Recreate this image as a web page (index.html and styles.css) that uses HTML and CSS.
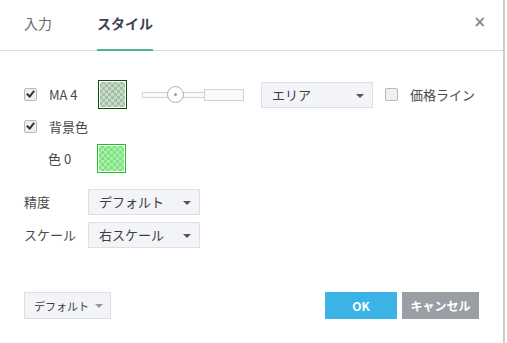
FILE: index.html
```html
<!DOCTYPE html>
<html lang="ja">
<head>
  <meta charset="UTF-8">
  <title>スタイル</title>
  <link rel="stylesheet" href="styles.css">
</head>
<body>
  <div class="dialog">
    <div class="header">
      <div class="tab">入力</div>
      <div class="tab active">スタイル</div>
      <span class="close">&times;</span>
    </div>

    <div class="content">
      <div class="row">
        <span class="check on"></span>
        <span class="label">MA 4</span>
        <span class="swatch ma"></span>
        <div class="slider">
          <span class="track"></span>
          <span class="knob"></span>
          <span class="track-box"></span>
        </div>
        <div class="select area">エリア<span class="caret"></span></div>
        <span class="check"></span>
        <span class="label price">価格ライン</span>
      </div>

      <div class="row">
        <span class="check on"></span>
        <span class="label">背景色</span>
      </div>

      <div class="row sub">
        <span class="label">色 0</span>
        <span class="swatch bg"></span>
      </div>

      <div class="row field first">
        <span class="field-label">精度</span>
        <div class="select">デフォルト<span class="caret"></span></div>
      </div>

      <div class="row field">
        <span class="field-label">スケール</span>
        <div class="select">右スケール<span class="caret"></span></div>
      </div>
    </div>

    <div class="footer">
      <div class="btn-default">デフォルト<span class="caret grey"></span></div>
      <div class="buttons">
        <div class="btn ok">OK</div>
        <div class="btn cancel">キャンセル</div>
      </div>
    </div>
  </div>
</body>
</html>
```

FILE: styles.css
```css
body {
  margin: 0;
  background: #fff;
  font-family: 'Noto Sans CJK JP', 'Liberation Sans', sans-serif;
  font-size: 13px;
  color: #4a4a4a;
}

.dialog {
  width: 503px;
  height: 343px;
  border-right: 2px solid #c8cfcc;
  position: relative;
}

.header {
  height: 50px;
  border-bottom: 1px solid #dcdcdc;
  display: flex;
  align-items: stretch;
  padding-left: 24px;
}

.tab {
  font-size: 14px;
  color: #6a6a6a;
  line-height: 46px;
  margin-right: 45px;
  border-bottom: 2px solid transparent;
  margin-bottom: -1px;
}

.tab.active {
  font-weight: bold;
  color: #3c4450;
  border-bottom-color: #4fb286;
}

.close {
  margin-left: auto;
  margin-right: 17px;
  font-size: 15px;
  font-weight: bold;
  color: #8a8a8a;
  line-height: 44px;
  font-family: 'DejaVu Sans', sans-serif;
}

.content {
  padding: 30px 0 0 24px;
}

.row {
  display: flex;
  align-items: center;
  height: 27px;
  margin-bottom: 5px;
}

.check {
  width: 11px;
  height: 11px;
  border: 1px solid #b8b8b8;
  border-radius: 2px;
  background: #f0f0f0;
  position: relative;
  margin-right: 12px;
}

.check.on::after {
  content: "";
  position: absolute;
  left: 3px;
  top: 0px;
  width: 3px;
  height: 6px;
  border: solid #333;
  border-width: 0 2px 2px 0;
  transform: rotate(40deg);
}

.label {
  color: #4a4a4a;
  width: 49px;
}

.label.price {
  width: auto;
}

.swatch {
  width: 25px;
  height: 25px;
  padding: 1px;
  background-clip: content-box;
  background-size: 6px 6px;
}

.swatch.ma {
  border: 1px solid #0b4d0b;
  background-color: #c8dac8;
  background-image: conic-gradient(#a6bea6 25%, transparent 0 50%, #a6bea6 0 75%, transparent 0);
}

.swatch.bg {
  border: 1px solid #1ec21e;
  background-color: #a6f2a6;
  background-image: conic-gradient(#84de84 25%, transparent 0 50%, #84de84 0 75%, transparent 0);
}

.slider {
  display: flex;
  align-items: center;
  margin-left: 15px;
  margin-right: 17px;
  position: relative;
  width: 102px;
}

.track {
  width: 62px;
  height: 4px;
  border: 1px solid #cfd3d8;
  border-right: none;
  background: #fafafa;
}

.track-box {
  width: 38px;
  height: 10px;
  border: 1px solid #cfd3d8;
  background: #fafafa;
}

.knob {
  position: absolute;
  left: 25px;
  top: 50%;
  width: 15px;
  height: 15px;
  margin-top: -9px;
  border: 1px solid #a7adb8;
  border-radius: 50%;
  background: #fff;
}

.knob::after {
  content: "";
  position: absolute;
  left: 6px;
  top: 6px;
  width: 3px;
  height: 3px;
  border-radius: 50%;
  background: #98a0ac;
}

.select {
  width: 100px;
  height: 24px;
  border: 1px solid #dcdfe3;
  background: #f2f4f7;
  display: flex;
  align-items: center;
  padding-left: 10px;
  color: #3c3c3c;
  position: relative;
}

.select.area {
  width: 100px;
  margin-right: 12px;
}

.caret {
  position: absolute;
  right: 8px;
  top: 11px;
  border: 4px solid transparent;
  border-top-color: #555;
  border-bottom: none;
}

.caret.grey {
  border-top-color: #999;
  position: static;
  margin-left: 6px;
}

.row.sub {
  padding-left: 24px;
}

.row.field {
  margin-bottom: 6px;
}

.row.field.first {
  margin-top: 16px;
}

.field-label {
  width: 64px;
  color: #4a4a4a;
}

.footer {
  position: absolute;
  left: 24px;
  right: 24px;
  top: 292px;
  display: flex;
  justify-content: space-between;
}

.btn-default {
  height: 25px;
  border: 1px solid #dcdfe3;
  background: #f2f4f7;
  display: flex;
  align-items: center;
  padding: 0 7px 0 9px;
  color: #3c3c3c;
  font-size: 11px;
}

.buttons {
  display: flex;
  gap: 5px;
}

.btn {
  height: 27px;
  display: flex;
  align-items: center;
  justify-content: center;
  color: #fff;
  font-weight: bold;
  font-size: 12px;
}

.btn.ok {
  width: 72px;
  background: #3bb4e5;
}

.btn.cancel {
  width: 77px;
  background: #9b9ea4;
}
```
